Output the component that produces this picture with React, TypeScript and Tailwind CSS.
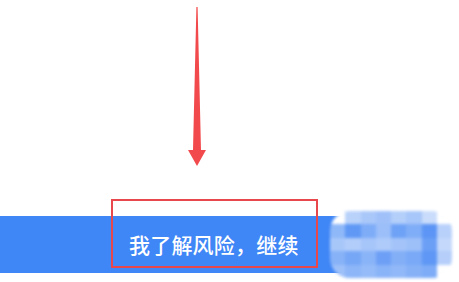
import React from "react";

const mosaic: string[][] = [
  ["#ffffff", "#b9d2fa", "#a9c7f9", "#9fc0f9", "#b3cffa", "#a7c6f9", "#c9dcfb", "#ffffff"],
  ["#8fb8f8", "#5f98f5", "#7eacf7", "#9cbff9", "#6ea2f6", "#7fadf7", "#5c95f5", "#b8d1fa"],
  ["#a8c7f9", "#b2cdfa", "#a6c5f9", "#aecbfa", "#a4c4f9", "#9ec0f9", "#6b9ff6", "#c3d8fb"],
  ["#87b2f7", "#76a7f6", "#8ab4f8", "#6d9ff6", "#83aff7", "#79a9f7", "#5e97f5", "#b5cffa"],
  ["#9ec0f9", "#8db6f8", "#95bbf8", "#8ab4f8", "#91b8f8", "#86b1f7", "#7eacf7", "#ffffff"],
];

export default function App() {
  return (
    <div className="relative w-[459px] h-[282px] bg-white overflow-hidden flex flex-col" style={{ fontFamily: '"Noto Sans CJK SC", "Noto Sans", sans-serif' }}>
      <svg width="459" height="216" viewBox="0 0 459 216" className="block shrink-0">
        <path d="M196.4 7 L197.6 7 L201 150 L206 150 L197 166 L188 150 L193 150 Z" fill="#f24a4c" />
      </svg>
      <div className="w-[444px] h-[57px] bg-[#3f86f6] rounded-r-[4px] flex items-center pl-[129px] shrink-0">
        <span className="text-white text-[21px] font-medium leading-none tracking-[0.2px] text-[#f4f8ff]">我了解风险，继续</span>
      </div>
      <div className="absolute left-[111px] top-[199px] w-[207px] h-[69px] border-2 border-[#e8474b]" />
      <div className="absolute left-[330px] top-[211px] w-[122px] h-[67px] rounded-[20px] overflow-hidden grid grid-cols-8 grid-rows-5 blur-[1.5px]">
        {mosaic.flat().map((c, i) => (
          <div key={i} style={{ backgroundColor: c }} />
        ))}
      </div>
    </div>
  );
}
